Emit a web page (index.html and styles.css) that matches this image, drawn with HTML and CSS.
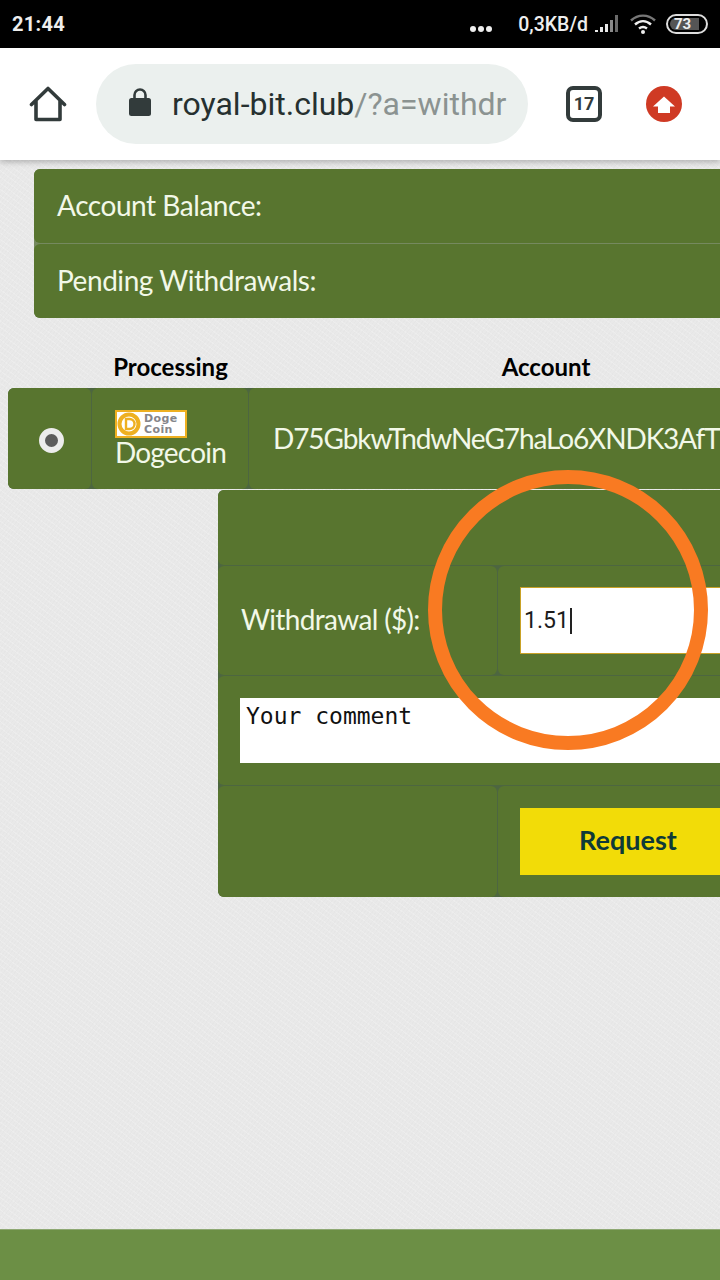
FILE: index.html
```html
<!DOCTYPE html>
<html lang="en">
<head>
  <meta charset="UTF-8">
  <meta name="viewport" content="width=device-width, initial-scale=1.0">
  <title>royal-bit.club</title>
  <link rel="stylesheet" href="styles.css">
</head>
<body>
<div class="status-bar">
  <span class="clock">21:44</span>
  <div class="status-right">
    <span class="dots"><i></i><i></i><i></i></span>
    <span class="speed">0,3KB/d</span>
    <svg class="signal" width="28" height="20" viewBox="0 0 28 20">
      <rect x="1" y="16" width="3" height="2" fill="#e8e8e8"/>
      <rect x="6" y="13" width="3" height="5" fill="#e8e8e8"/>
      <rect x="11" y="10" width="3" height="8" fill="#e8e8e8"/>
      <rect x="16" y="6" width="3" height="12" fill="#8a8a8a"/>
      <rect x="21" y="1" width="3" height="17" fill="#6a6a6a"/>
    </svg>
    <svg class="wifi" width="28" height="22" viewBox="0 0 28 22" fill="none">
      <path d="M2 7.500C9 1 19 1 26 7.500" stroke="#777" stroke-width="2.400"/>
      <path d="M6 11.500C11 7 17 7 22 11.500" stroke="#eee" stroke-width="2.400"/>
      <path d="M10 15.500C12.500 13.500 15.500 13.500 18 15.500" stroke="#eee" stroke-width="2.400"/>
      <circle cx="14" cy="19" r="2" fill="#eee"/>
    </svg>
    <span class="battery"><span class="battery-level">73</span></span>
  </div>
</div>

<header class="toolbar">
  <svg class="home-icon" width="38" height="38" viewBox="0 0 38 38" fill="none">
    <path d="M2.500 19.500L19 3.500L35.500 19.500M7 16V34.500H31V16" stroke="#323b3b" stroke-width="3.600" stroke-linejoin="round" stroke-linecap="round"/>
  </svg>
  <div class="url-pill">
    <svg class="lock-icon" width="22" height="30" viewBox="0 0 22 30">
      <path d="M5.500 13V8a5.500 5.500 0 0 1 11 0V13" fill="none" stroke="#323b3b" stroke-width="2.600"/>
      <rect x="0" y="11" width="22" height="18" rx="2.500" fill="#323b3b"/>
    </svg>
    <span class="url"><span class="url-host">royal-bit.club</span>/?a=withdr</span>
  </div>
  <span class="tab-count">17</span>
  <svg class="update-icon" width="36" height="36" viewBox="0 0 36 36">
    <circle cx="18" cy="18" r="18" fill="#cf3a24"/>
    <path d="M18 10.500L29 20.500H24V27H12V20.500H7Z" fill="#fff"/>
  </svg>
</header>

<main class="page">
  <section class="summary">
    <div class="cell summary-row">Account Balance:</div>
    <div class="cell summary-row">Pending Withdrawals:</div>
  </section>

  <section class="processing">
    <div class="processing-head">
      <span class="head-radio"></span>
      <span class="head-name">Processing</span>
      <span class="head-account">Account</span>
    </div>
    <div class="processing-row">
      <div class="cell radio-cell"><span class="radio"></span></div>
      <div class="cell name-cell">
        <span class="doge-logo">
          <svg width="26" height="24" viewBox="0 0 26 24">
            <circle cx="12" cy="12" r="9.500" fill="#fff" stroke="#eeb021" stroke-width="4"/>
            <path d="M9 7h3.500a5 5 0 0 1 0 10H9Z" fill="none" stroke="#eeb021" stroke-width="2.400"/>
          </svg>
          <span class="doge-text">Doge<br>Coin</span>
        </span>
        <span class="doge-name">Dogecoin</span>
      </div>
      <div class="cell account-cell">D75GbkwTndwNeG7haLo6XNDK3AfT</div>
    </div>
  </section>

  <form class="withdraw">
    <div class="cell form-row blank-row"></div>
    <div class="form-row split">
      <div class="cell label-cell">Withdrawal ($):</div>
      <div class="cell field-cell">
        <div class="amount-input">1.51<span class="caret"></span></div>
      </div>
    </div>
    <div class="cell form-row comment-row">
      <div class="comment-input">Your comment</div>
    </div>
    <div class="form-row split last-row">
      <div class="cell label-cell"></div>
      <div class="cell field-cell">
        <button class="request-btn" type="button">Request</button>
      </div>
    </div>
  </form>

  <div class="highlight-ring"></div>
</main>

<footer class="footer"></footer>
</body>
</html>
```

FILE: styles.css
```css
* {
  box-sizing: border-box;
}
html, body {
  margin: 0;
  height: 100%;
}
body {
  display: flex;
  flex-direction: column;
  width: 720px;
  height: 1280px;
  overflow: hidden;
  font-family: Roboto, sans-serif;
  background-color: #e9e9e9;
}

/* status bar */
.status-bar {
  flex: none;
  height: 48px;
  padding: 0 12px;
  display: flex;
  justify-content: space-between;
  align-items: center;
  background-color: #000;
  color: #eee;
}
.clock {
  font-size: 20px;
  font-weight: 700;
  letter-spacing: 0.3px;
}
.status-right {
  display: flex;
  align-items: center;
}
.dots {
  display: flex;
  gap: 2px;
  margin-top: 10px;
  margin-right: 26px;
}
.dots i {
  width: 6px;
  height: 6px;
  border-radius: 50%;
  background-color: #eee;
}
.speed {
  font-size: 19.5px;
  font-weight: 500;
  margin-right: 6px;
}
.signal {
  margin-right: 7px;
}
.wifi {
  margin-right: 9px;
}
.battery {
  width: 42px;
  height: 20px;
  padding: 2px;
  border: 2px solid #ddd;
  border-radius: 10px;
  display: flex;
}
.battery-level {
  width: 29px;
  padding-left: 4px;
  border-radius: 6px 0 0 6px;
  background-color: #555;
  color: #eee;
  font-size: 15px;
  font-weight: 700;
  line-height: 13px;
}

/* browser toolbar */
.toolbar {
  flex: none;
  position: relative;
  z-index: 2;
  height: 112px;
  display: flex;
  align-items: center;
  padding-left: 29px;
  background-color: #fff;
  box-shadow: 0 2px 6px rgba(0, 0, 0, 0.25);
}
.url-pill {
  width: 432px;
  height: 80px;
  margin-left: 29px;
  padding-left: 33px;
  display: flex;
  align-items: center;
  gap: 21px;
  border-radius: 40px;
  background-color: #ebf0ee;
  overflow: hidden;
}
.lock-icon {
  flex: none;
  margin-top: -4px;
}
.url {
  font-size: 32px;
  color: #8b9391;
  white-space: nowrap;
}
.url-host {
  color: #263030;
}
.tab-count {
  width: 36px;
  height: 36px;
  margin-left: 38px;
  border: 4px solid #323b3b;
  border-radius: 7px;
  color: #323b3b;
  font-size: 18px;
  font-weight: 700;
  line-height: 28px;
  text-align: center;
}
.update-icon {
  margin-left: 44px;
}

/* page */
.page {
  flex: 1;
  position: relative;
  padding: 9px 0 0 8px;
  font-family: Lato, sans-serif;
  color: #f2f8e8;
  font-size: 28px;
  background-color: #e9e9e9;
  background-image:
    repeating-linear-gradient(37deg, rgba(255, 255, 255, 0.18) 0 1px, transparent 1px 5px),
    repeating-linear-gradient(-53deg, rgba(0, 0, 0, 0.012) 0 1px, transparent 1px 3px);
}
.cell {
  border-radius: 6px;
  background-color: #58752f;
}
.summary {
  width: 720px;
  margin-left: 26px;
  display: flex;
  flex-direction: column;
  gap: 1px;
  border-radius: 6px;
  background-color: #75895f;
}
.summary-row {
  height: 74px;
  padding: 0 0 2px 23px;
  display: flex;
  align-items: center;
  letter-spacing: -0.45px;
}

.processing-head {
  height: 38px;
  margin-top: 30px;
  padding-bottom: 2px;
  display: flex;
  align-items: center;
  color: #000;
  font-size: 24px;
  font-weight: 700;
  text-align: center;
}
.head-radio {
  width: 84px;
  flex: none;
}
.head-name {
  width: 157px;
  flex: none;
}
.head-account {
  width: 594px;
  flex: none;
}
.processing-row {
  display: flex;
  height: 101px;
  width: 835px;
  margin-top: 2px;
  gap: 1px;
  border-radius: 6px;
  background-color: #4d6640;
}
.radio-cell {
  width: 83px;
  flex: none;
  padding: 3px 0 0 3px;
  display: flex;
  justify-content: center;
  align-items: center;
}
.radio {
  width: 25px;
  height: 25px;
  border: 6px solid #ececec;
  border-radius: 50%;
  background-color: #5c5c5c;
}
.name-cell {
  width: 156px;
  flex: none;
  padding: 22px 0 0 23px;
  display: flex;
  flex-direction: column;
  align-items: flex-start;
}
.doge-logo {
  width: 72px;
  height: 28px;
  display: flex;
  align-items: center;
  border: 2px solid #eeb021;
  background-color: #fff;
}
.doge-text {
  margin-left: 1px;
  color: #85858a;
  font-family: "DejaVu Sans", sans-serif;
  font-size: 11px;
  font-weight: 700;
  line-height: 11px;
  letter-spacing: 0.4px;
}
.doge-name {
  line-height: 29px;
  letter-spacing: -0.8px;
}
.account-cell {
  width: 594px;
  flex: none;
  padding: 0 0 2px 24px;
  display: flex;
  align-items: center;
  white-space: nowrap;
  letter-spacing: -1.1px;
}

.withdraw {
  width: 640px;
  margin: 1px 0 0 210px;
  display: flex;
  flex-direction: column;
  gap: 1px;
  border-radius: 6px;
  background-color: #4d6640;
}
.form-row {
  flex: none;
}
.blank-row {
  height: 75px;
}
.split {
  height: 109px;
  display: flex;
  gap: 1px;
}
.last-row {
  height: 111px;
}
.label-cell {
  width: 279px;
  flex: none;
  padding: 0 0 4px 23px;
  display: flex;
  align-items: center;
  letter-spacing: -0.65px;
}
.field-cell {
  flex: 1;
  padding-left: 22px;
  display: flex;
  align-items: center;
}
.amount-input {
  width: 100%;
  height: 67px;
  padding-left: 3px;
  display: flex;
  align-items: center;
  border: 1px solid #c9a227;
  background-color: #fff;
  color: #1c1c1c;
  font-family: Roboto, sans-serif;
  font-size: 23px;
}
.caret {
  width: 2px;
  height: 26px;
  margin-left: 1px;
  background-color: #222;
}
.comment-row {
  height: 109px;
  padding: 22px 0 0 22px;
}
.comment-input {
  height: 65px;
  padding: 5px 6px;
  background-color: #fff;
  color: #111;
  font-family: "DejaVu Sans Mono", monospace;
  font-size: 23px;
}
.request-btn {
  width: 216px;
  height: 67px;
  padding: 0 0 4px;
  border: none;
  background-color: #f2dc08;
  color: #0e3a38;
  font-family: Lato, sans-serif;
  font-size: 27px;
  font-weight: 700;
}

/* orange marker drawn over the screenshot */
.highlight-ring {
  position: absolute;
  left: 428px;
  top: 310px;
  width: 280px;
  height: 280px;
  border: 14px solid #f97a22;
  border-radius: 50%;
}

.footer {
  flex: none;
  height: 51px;
  border-top: 1px solid #8ea873;
  background-color: #6c8f45;
}
```
